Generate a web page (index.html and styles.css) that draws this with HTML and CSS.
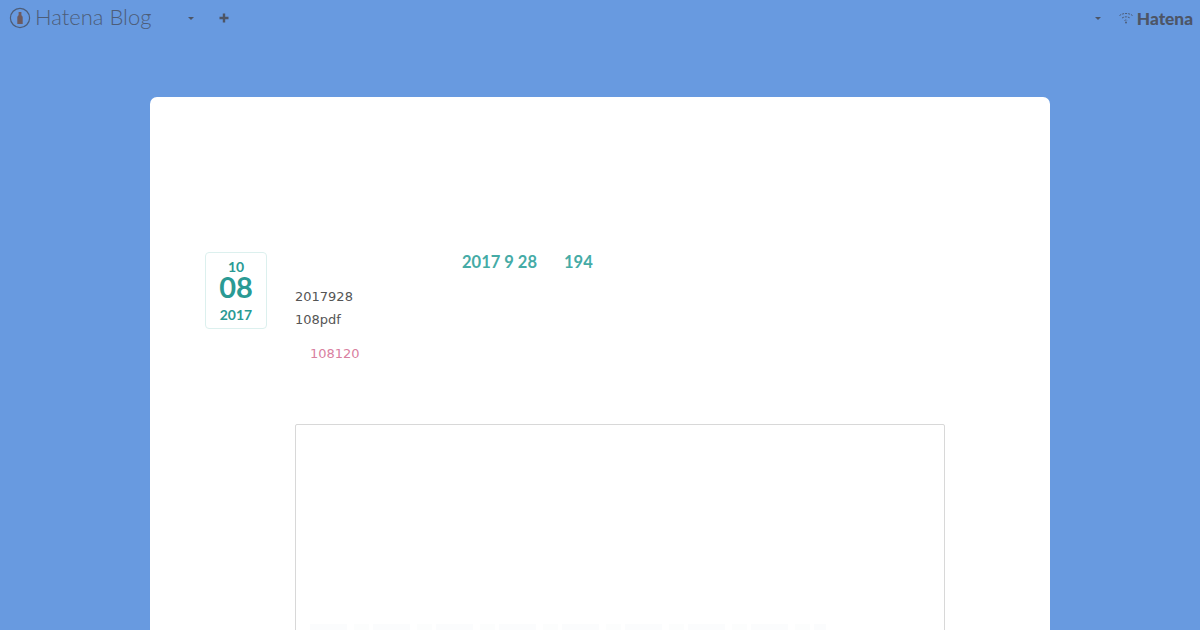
FILE: index.html
```html
<!DOCTYPE html>
<html lang="ja">
<head>
<meta charset="utf-8">
<title>Hatena Blog</title>
<link rel="stylesheet" href="styles.css">
</head>
<body>
<header class="topbar">
  <div class="topbar-left">
    <svg class="logo-mark" width="22" height="22" viewBox="0 0 22 22" aria-hidden="true">
      <circle cx="11" cy="11" r="9.6" fill="none" stroke="#4d5d78" stroke-width="1.2"/>
      <path d="M9.600 5h2.800v3.200c.9.700 1.300 1.400 1.300 2.400V17H8.300v-6.400c0-1 .4-1.700 1.300-2.400z" fill="#6d5a5e"/>
    </svg>
    <span class="logo-text">Hatena Blog</span>
    <span class="caret caret-left"></span>
    <svg class="plus" width="10" height="10" viewBox="0 0 10 10" aria-hidden="true">
      <path d="M5 .5v9M.5 5h9" stroke="#4d5566" stroke-width="2.400" fill="none"/>
    </svg>
  </div>
  <div class="topbar-right">
    <span class="caret"></span>
    <svg class="wifi" width="14" height="12" viewBox="0 0 14 12" aria-hidden="true">
      <path d="M.5 3.500C4 .8 10 .8 13.500 3.500M3 6c2.500-1.600 5.500-1.600 8 0M5.500 8.500c1-.6 2-.6 3 0" fill="none" stroke="#4d5d78" stroke-width="1" stroke-dasharray="2 1"/>
      <circle cx="7" cy="10.500" r="1" fill="#4d5d78"/>
    </svg>
    <span class="brand">Hatena</span>
  </div>
</header>
<main class="card">
  <article class="entry">
    <div class="date-box">
      <span class="date-month">10</span>
      <span class="date-day">08</span>
      <span class="date-year">2017</span>
    </div>
    <div class="entry-body">
      <h1 class="entry-title"><span>2017 9 28</span><span>194</span></h1>
      <p class="para">2017928<br>108pdf</p>
      <p class="note">108120</p>
      <div class="embed"><div class="embed-faint"></div></div>
    </div>
  </article>
</main>
</body>
</html>
```
FILE: styles.css
```css
html, body {
  margin: 0;
  height: 630px;
  overflow: hidden;
}
body {
  background: #689ae0;
  font-family: "DejaVu Sans", sans-serif;
  color: #555;
}
.topbar {
  display: flex;
  justify-content: space-between;
  height: 36px;
  align-items: center;
}
.topbar-left, .topbar-right {
  display: flex;
  align-items: center;
}
.topbar-left { padding-left: 9px; }
.topbar-right { padding-right: 7px; }
.logo-text {
  font-family: "Lato", sans-serif;
  font-weight: 300;
  font-size: 22px;
  line-height: 32px;
  color: #4d5d78;
  margin: 0 0 3px 4px;
  width: 118px;
  white-space: nowrap;
}
.caret {
  width: 0;
  height: 0;
  border-left: 3px solid transparent;
  border-right: 3px solid transparent;
  border-top: 3px solid #4d5566;
}
.caret-left { margin-left: 35px; }
.plus { margin-left: 25px; }
.wifi { margin-left: 18px; }
.brand {
  font-family: "Lato", sans-serif;
  font-weight: 900;
  font-size: 17.3px;
  color: #4d5566;
  margin-left: 4px;
}
.card {
  box-sizing: border-box;
  width: 900px;
  height: 533px;
  overflow: hidden;
  margin: 61px auto 0;
  padding: 155px 55px 0;
  background: #fff;
  border-radius: 7px 7px 0 0;
}
.entry {
  display: flex;
  align-items: flex-start;
  gap: 28px;
}
.date-box {
  box-sizing: border-box;
  width: 62px;
  height: 77px;
  flex: none;
  display: flex;
  flex-direction: column;
  align-items: center;
  border: 1px solid #dcf0ee;
  border-radius: 4px;
  color: #2a9a94;
  font-family: "Lato", sans-serif;
  padding-top: 6px;
}
.date-month { font-size: 14px; line-height: 15px; font-weight: 700; }
.date-day { font-size: 29px; line-height: 25px; font-weight: 700; }
.date-year { font-size: 14px; line-height: 16px; margin-top: 8px; font-weight: 700; }
.entry-body { width: 650px; flex: none; }
.entry-title {
  margin: -1px 0 0 167px;
  display: flex;
  gap: 27px;
  font-family: "Lato", sans-serif;
  font-size: 16.5px;
  line-height: 22px;
  font-weight: 700;
  color: #45aba6;
}
.para {
  margin: 12px 0 0;
  font-size: 13px;
  line-height: 23px;
}
.note {
  margin: 11px 0 0 15px;
  font-size: 13px;
  line-height: 23px;
  color: #d9809f;
}
.embed {
  box-sizing: border-box;
  height: 260px;
  margin-top: 59px;
  padding: 199px 14px 0;
  border: 1px solid #d8d8d8;
  border-radius: 2px;
}
.embed-faint {
  width: 516px;
  height: 8px;
  background: repeating-linear-gradient(90deg, #fbfcfd 0 37px, #fff 37px 44px, #fcfdfd 44px 59px, #fff 59px 63px);
}
```
